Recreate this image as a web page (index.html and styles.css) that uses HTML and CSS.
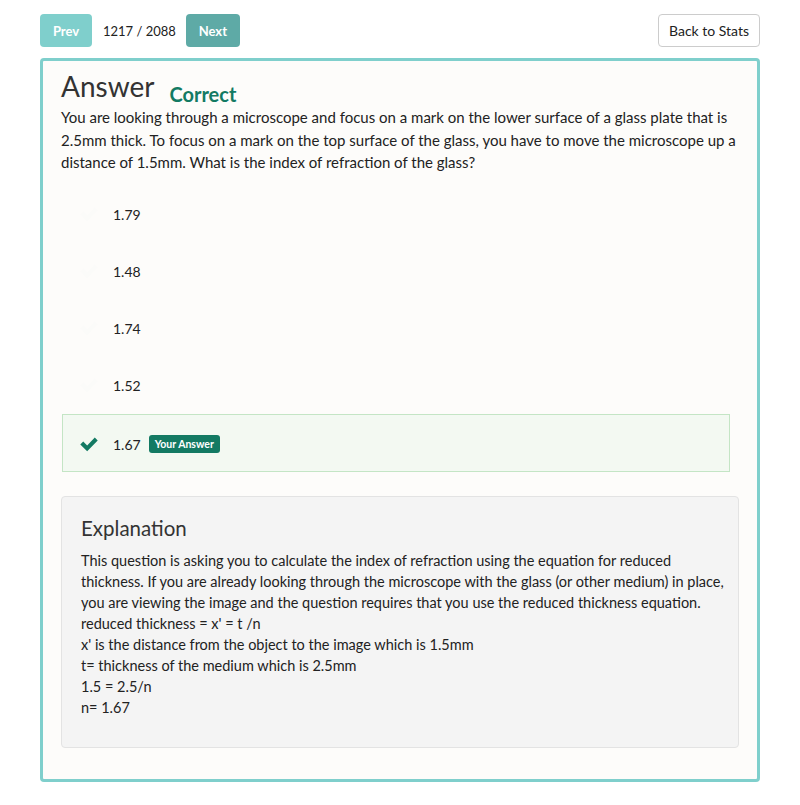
FILE: index.html
```html
<!DOCTYPE html>
<html>
<head>
<meta charset="utf-8">
<link rel="stylesheet" href="styles.css">
</head>
<body>
<div class="page">
  <div class="topbar">
    <div class="nav">
      <button class="btn btn-prev">Prev</button>
      <span class="counter">1217 / 2088</span>
      <button class="btn btn-next">Next</button>
    </div>
    <button class="btn btn-back">Back to Stats</button>
  </div>
  <div class="card">
    <div class="title-row">
      <h1 class="title">Answer</h1>
      <span class="status">Correct</span>
    </div>
    <p class="question">You are looking through a microscope and focus on a mark on the lower surface of a glass plate that is 2.5mm thick. To focus on a mark on the top surface of the glass, you have to move the microscope up a distance of 1.5mm. What is the index of refraction of the glass?</p>
    <ul class="options">
      <li class="option"><svg class="check faint" viewBox="0 0 24 24"><path d="M2.5 12.5l3.2-3.2 4.3 4.3 8.3-8.6 3.2 3.2-11.5 11.8z"/></svg><span>1.79</span></li>
      <li class="option"><svg class="check faint" viewBox="0 0 24 24"><path d="M2.5 12.5l3.2-3.2 4.3 4.3 8.3-8.6 3.2 3.2-11.5 11.8z"/></svg><span>1.48</span></li>
      <li class="option"><svg class="check faint" viewBox="0 0 24 24"><path d="M2.5 12.5l3.2-3.2 4.3 4.3 8.3-8.6 3.2 3.2-11.5 11.8z"/></svg><span>1.74</span></li>
      <li class="option"><svg class="check faint" viewBox="0 0 24 24"><path d="M2.5 12.5l3.2-3.2 4.3 4.3 8.3-8.6 3.2 3.2-11.5 11.8z"/></svg><span>1.52</span></li>
      <li class="option selected"><svg class="check" viewBox="0 0 24 24"><path d="M2.5 12.5l3.2-3.2 4.3 4.3 8.3-8.6 3.2 3.2-11.5 11.8z"/></svg><span>1.67</span><span class="badge">Your Answer</span></li>
    </ul>
    <div class="explanation">
      <h2 class="exp-title">Explanation</h2>
      <p class="exp-text">This question is asking you to calculate the index of refraction using the equation for reduced thickness. If you are already looking through the microscope with the glass (or other medium) in place, you are viewing the image and the question requires that you use the reduced thickness equation.<br>reduced thickness = x' = t /n<br>x' is the distance from the object to the image which is 1.5mm<br>t= thickness of the medium which is 2.5mm<br>1.5 = 2.5/n<br>n= 1.67</p>
    </div>
  </div>
</div>
</body>
</html>
```
FILE: styles.css
```css
* { box-sizing: border-box; }
html, body { margin: 0; padding: 0; background: #ffffff; }
body { font-family: Lato, "Open Sans", sans-serif; color: #333; font-size: 15px; }
.page { padding: 14px 40px 0 40px; }
.topbar { display: flex; justify-content: space-between; align-items: center; height: 33px; margin-bottom: 11px; }
.nav { display: flex; align-items: center; gap: 11px; }
.btn { font-family: inherit; border-radius: 4px; height: 33px; cursor: pointer; }
.btn-prev, .btn-next { color: #fff; font-weight: bold; font-size: 13px; border: none; padding: 0; }
.btn-prev { background: #7fcfcc; width: 52px; }
.btn-next { background: #5eaaa6; width: 54px; }
.counter { font-size: 13px; color: #222; margin-right: -1px; }
.btn-back { background: #fff; border: 1px solid #cccccc; color: #222; font-size: 14px; width: 102px; padding: 0; }
.card { border: 3px solid #7fcfcc; border-radius: 4px; background: #fdfcfa; padding: 8px 18px 31px 18px; }
.title-row { display: flex; align-items: baseline; gap: 15px; }
.title { font-size: 28px; font-weight: normal; margin: 0; color: #333; line-height: 34px; }
.status { font-size: 20px; font-weight: bold; color: #137a63; position: relative; top: 5px; }
.question { margin: 3px 0 12px 0; line-height: 22.5px; color: #222; }
.options { list-style: none; margin: 0 9px 24px 1px; padding: 0; font-size: 14px; }
.option { display: flex; align-items: center; height: 57px; padding-left: 15px; border: 1px solid transparent; color: #222; }
.option.selected { background: #f3f9f2; border-color: #c4e5c5; height: 58px; padding-top: 3px; }
.check { width: 22px; height: 22px; margin-right: 13px; fill: #137a63; }
.check.faint { fill: #fbfbf9; }
.badge { background: #137a63; color: #fff; font-weight: bold; font-size: 10.5px; border-radius: 3px; padding: 3px 6px; margin-left: 8px; }
.explanation { background: #f4f4f4; border: 1px solid #e3e3e3; border-radius: 4px; padding: 17px 14px 29px 19px; }
.exp-title { font-size: 20.5px; font-weight: normal; margin: 0 0 8px 0; color: #333; line-height: 28px; }
.exp-text { margin: 0; line-height: 21px; color: #222; font-size: 14.5px; }
```
